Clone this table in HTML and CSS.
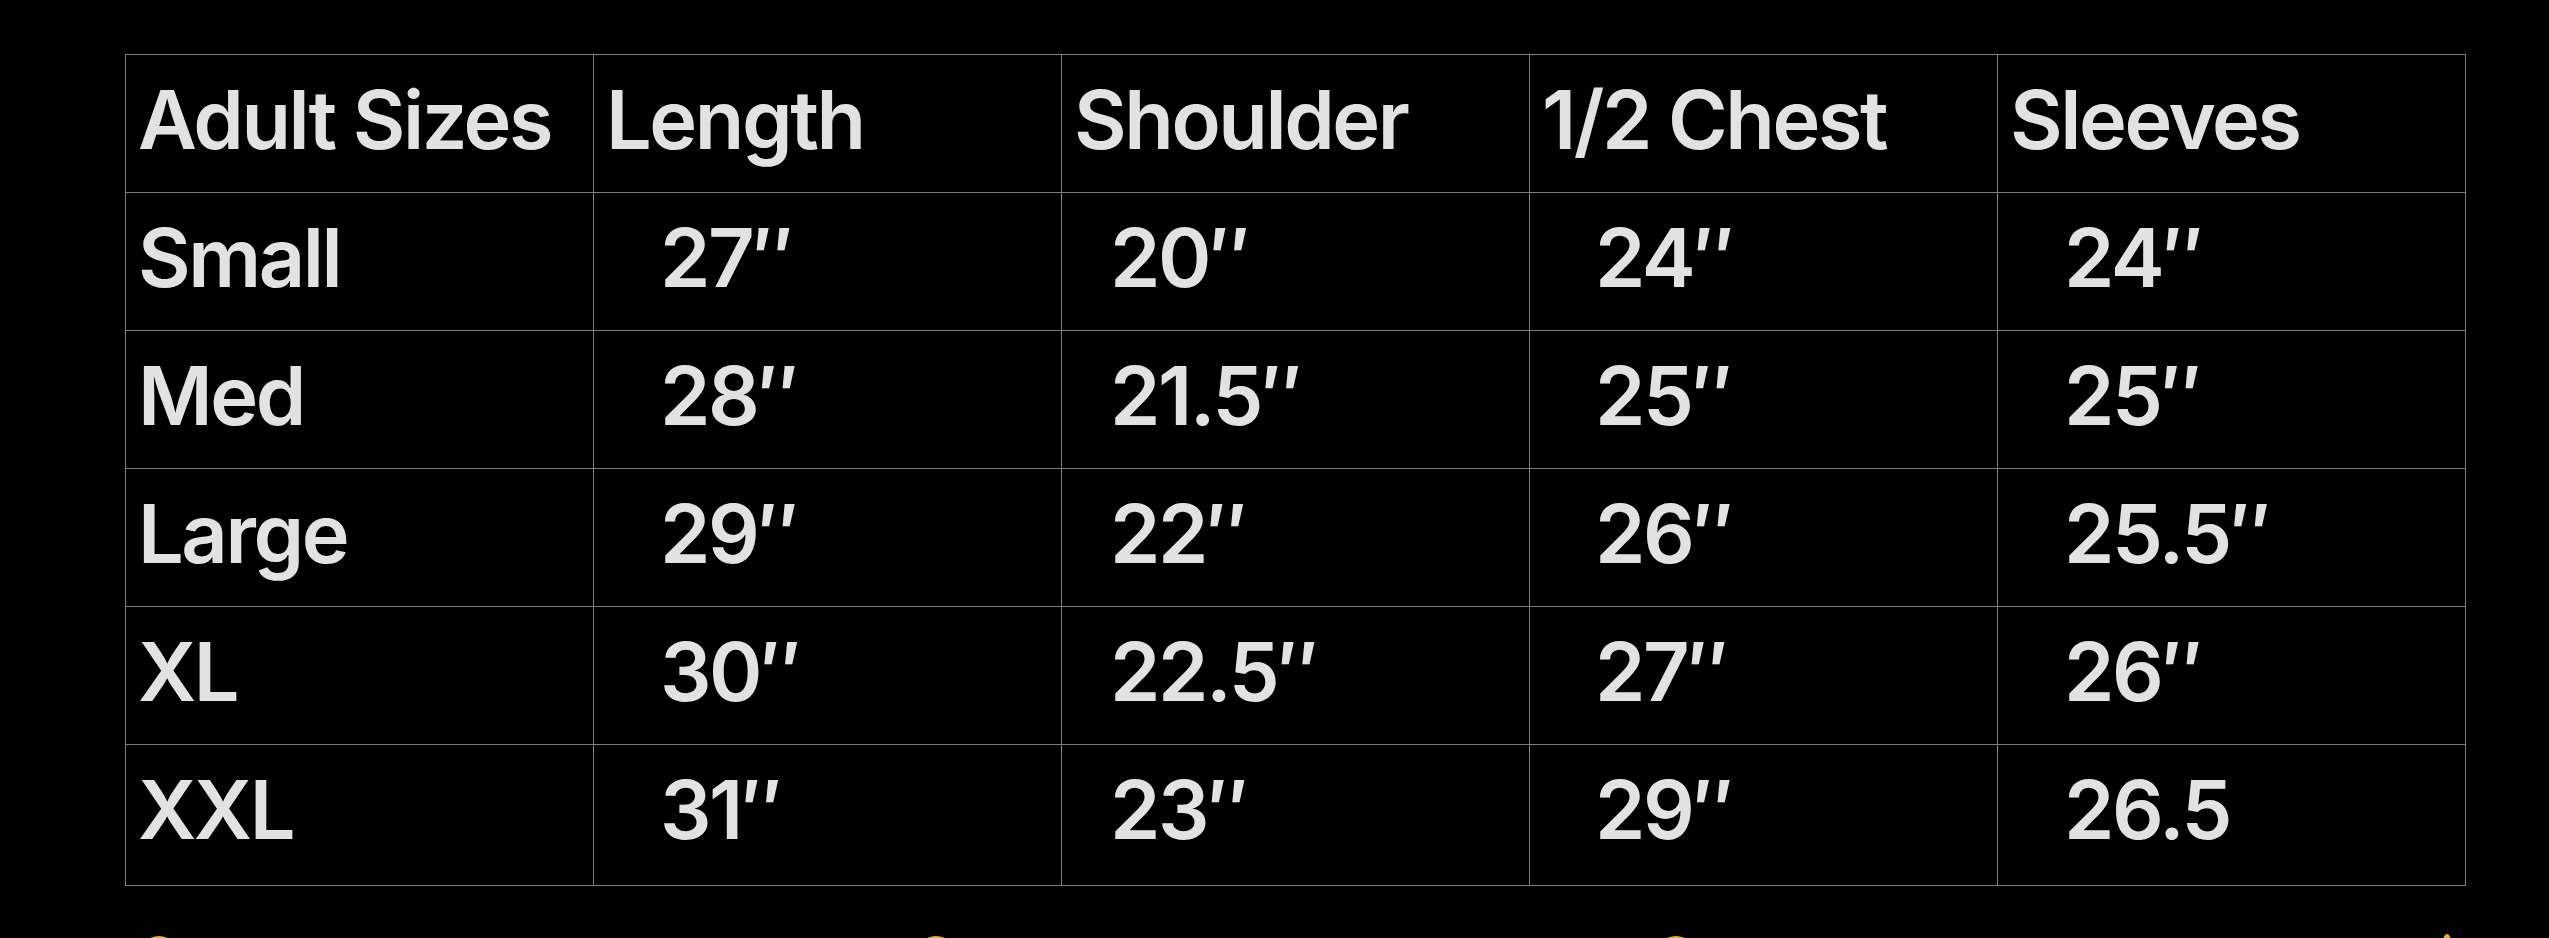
FILE: index.html
```html
<!DOCTYPE html>
<html lang="en">
<head>
<meta charset="utf-8">
<title>Adult Sizes</title>
<link rel="stylesheet" href="styles.css">
</head>
<body>
<main class="page">
  <table class="sizes">
    <thead>
      <tr>
        <th>Adult Sizes</th>
        <th>Length</th>
        <th>Shoulder</th>
        <th>1/2 Chest</th>
        <th>Sleeves</th>
      </tr>
    </thead>
    <tbody>
      <tr><th>Small</th><td>27″</td><td>20″</td><td>24″</td><td>24″</td></tr>
      <tr><th>Med</th><td>28″</td><td>21.5″</td><td>25″</td><td>25″</td></tr>
      <tr><th>Large</th><td>29″</td><td>22″</td><td>26″</td><td>25.5″</td></tr>
      <tr><th>XL</th><td>30″</td><td>22.5″</td><td>27″</td><td>26″</td></tr>
      <tr class="last"><th>XXL</th><td>31″</td><td>23″</td><td>29″</td><td>26.5</td></tr>
    </tbody>
  </table>
  <div class="dots">
    <span class="dot d1"></span>
    <span class="dot d2"></span>
    <span class="dot d3"></span>
    <span class="dot d4"></span>
  </div>
</main>
</body>
</html>
```
FILE: styles.css
```css
html, body {
  margin: 0;
  padding: 0;
  background: #000;
  height: 100%;
  overflow: hidden;
}
.page {
  padding: 54px 0 0 125px;
  font-family: Inter, "Noto Sans", "Liberation Sans", sans-serif;
  color: #e2e2e2;
}
.sizes {
  border-collapse: collapse;
  table-layout: fixed;
  width: 2341px;
}
.sizes tr {
  height: 138px;
}
.sizes tr.last {
  height: 141px;
}
.sizes th,
.sizes td {
  border: 1px solid #7c7c7c;
  width: 468px;
  box-sizing: border-box;
  vertical-align: top;
  text-align: left;
  font-size: 81px;
  font-weight: 600;
  letter-spacing: -0.03em;
  line-height: 98px;
  padding: 16px 0 0 12px;
  white-space: nowrap;
  overflow: hidden;
}
.sizes td:nth-child(2) { padding-left: 66px; }
.sizes td:nth-child(3) { padding-left: 48px; }
.sizes td:nth-child(4) { padding-left: 65px; }
.sizes td:nth-child(5) { padding-left: 66px; }
.dots {
  display: flex;
  padding-top: 50px;
}
.dot {
  display: block;
  width: 40px;
  height: 40px;
  border-radius: 50%;
  background: #e6b41e;
}
.d1 { margin-left: 14px; }
.d2 { margin-left: 737px; }
.d3 { margin-left: 700px; }
.d4 {
  margin-left: 745px;
  width: 12px;
  margin-top: -2px;
  border-radius: 50% 50% 0 0;
}
```
